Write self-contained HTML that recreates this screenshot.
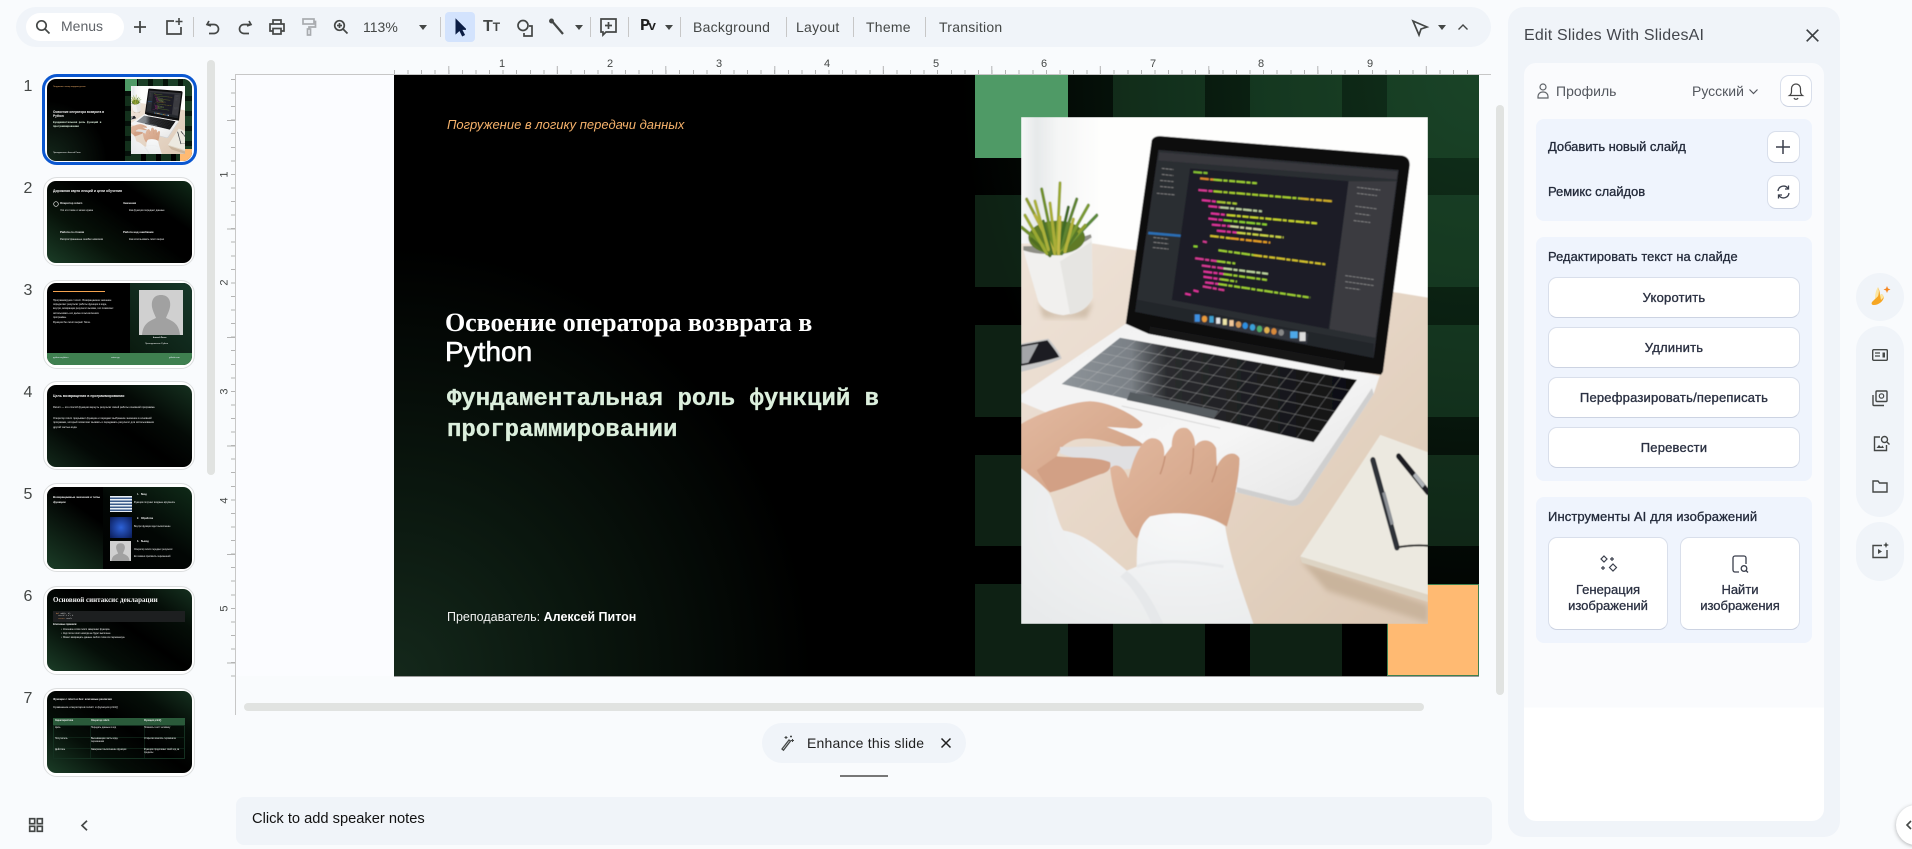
<!DOCTYPE html>
<html lang="ru"><head><meta charset="utf-8"><title>Slides</title>
<style>
*{box-sizing:border-box;margin:0;padding:0}
html,body{width:1912px;height:849px;overflow:hidden;background:#f9fbfd;font-family:"Liberation Sans",sans-serif;color:#444746}
.a{position:absolute}
#root{position:relative;width:1912px;height:849px;overflow:hidden}
.sep{position:absolute;top:17px;width:1px;height:20px;background:#c7c7c7}
.lb{position:absolute;top:19px;font-size:14px;line-height:16px;letter-spacing:.25px;color:#444746;white-space:nowrap}
svg.ic{position:absolute;fill:none;stroke:#444746;stroke-width:1.7;overflow:visible}
.rl{position:absolute;top:58px;font-size:11px;line-height:13px;width:12px;text-align:center;color:#444746}
.vl{position:absolute;left:219px;font-size:11px;line-height:13px;width:12px;text-align:center;transform:rotate(-90deg);color:#444746}
.tile{position:absolute;background:rgba(48,108,66,.3)}
.num{position:absolute;width:30px;left:13px;text-align:center;font-size:16px;line-height:18px;color:#444746}
.fr{position:absolute;left:43px;width:152px;height:89px;background:#fff;border:1.5px solid #dcdedf;border-radius:14px}
.s{position:absolute;left:47px;width:145px;height:82px;border-radius:9px;overflow:hidden;background:linear-gradient(45deg,#15301f 0%,#030805 40%,#000 60%,#0f2a18 100%)}
.t{position:absolute;color:#f2f2f2;font-size:2.8px;line-height:3.4px;font-weight:700;white-space:nowrap}
.panelT{position:absolute;font-size:13px;line-height:16px;color:#232a3a;-webkit-text-stroke:.3px #232a3a;white-space:nowrap}
.btn{position:absolute;left:1548px;width:252px;height:41px;background:#fff;border:1px solid #d9dfeb;border-bottom:1.5px solid #ccd3e2;border-radius:9px;text-align:center;font-size:13px;line-height:39px;color:#2b3142;-webkit-text-stroke:.35px #2b3142;letter-spacing:.2px}
.sq{position:absolute;background:#fff;border:1px solid #d9dfeb;border-bottom:1.5px solid #ccd3e2;border-radius:9px}
.pill{position:absolute;left:1856px;width:48px;background:#f0f4f9;border-radius:24px}
</style></head><body><div id="root">

<!-- symbols -->
<svg width="0" height="0" style="position:absolute">
<defs>
<linearGradient id="desk" x1="0" y1="0" x2="1" y2="1"><stop offset="0" stop-color="#eee3d8"/><stop offset=".5" stop-color="#e6d6c6"/><stop offset="1" stop-color="#dcc8b4"/></linearGradient>
<linearGradient id="kb" x1="300" y1="0" x2="1190" y2="0" gradientUnits="userSpaceOnUse"><stop offset="0" stop-color="#8f959a"/><stop offset=".24" stop-color="#7a8086"/><stop offset=".36" stop-color="#2a2b2e"/><stop offset="1" stop-color="#0e0e10"/></linearGradient>
<linearGradient id="cur" x1="183" y1="0" x2="420" y2="0" gradientUnits="userSpaceOnUse"><stop offset="0" stop-color="#f7f8f8"/><stop offset=".2" stop-color="#e6e9ea"/><stop offset=".45" stop-color="#f4f5f5"/><stop offset="1" stop-color="#fefefd"/></linearGradient>
<linearGradient id="base" x1="0" y1="0" x2="1" y2="1"><stop offset="0" stop-color="#f2f2f2"/><stop offset=".6" stop-color="#f5f5f5"/><stop offset="1" stop-color="#e2e2e2"/></linearGradient>
<linearGradient id="skin" x1="0" y1="0" x2="1" y2="1"><stop offset="0" stop-color="#e3b9a0"/><stop offset="1" stop-color="#cf9f82"/></linearGradient>
<radialGradient id="slv" cx=".7" cy=".3" r=".9"><stop offset="0" stop-color="#f7f8f9"/><stop offset="1" stop-color="#e8eaeb"/></radialGradient>
<filter id="bl" x="0" y="0" width="100%" height="100%"><feGaussianBlur stdDeviation="1.6"/></filter>
<filter id="bl2" x="-20%" y="-20%" width="140%" height="140%"><feGaussianBlur stdDeviation="7"/></filter>
<symbol id="photo" viewBox="183 140 1220 1263" preserveAspectRatio="none">
<g filter="url(#bl)">
<rect x="183" y="140" width="1220" height="1263" fill="#fefefd"/>
<rect x="183" y="140" width="240" height="340" fill="url(#cur)"/>
<polygon points="183,455 400,455 1403,590 1403,1403 183,1403" fill="url(#desk)"/>
<path d="M235,600 Q300,660 400,600 L380,640 L250,640Z" fill="#cfbda9" filter="url(#bl2)"/>
<path d="M190,472 Q290,500 395,440 L398,590 Q380,625 310,634 Q250,628 235,600 Z" fill="#f1f0ee"/>
<path d="M300,500 L395,450 L398,590 Q380,625 330,632Z" fill="#e6e5e2"/>
<path d="M190,472 Q290,500 395,440 L392,432 Q290,462 190,462Z" fill="#8f8f86"/>
<ellipse cx="290" cy="440" rx="85" ry="42" fill="#5f7a26"/>
<g stroke-width="9" stroke-linecap="round" fill="none">
<path d="M285,480 L200,345" stroke="#8c9b2e"/><path d="M285,480 L245,320" stroke="#6f8f2a"/><path d="M290,480 L300,305" stroke="#9aa832"/><path d="M295,480 L350,345" stroke="#5f8430"/><path d="M300,480 L410,385" stroke="#5c8a3a"/><path d="M280,480 L185,415" stroke="#6f8f2a"/><path d="M270,485 L215,445" stroke="#4f6e24"/><path d="M285,480 L225,385" stroke="#b7b23c"/><path d="M288,480 L270,355" stroke="#a9ad38"/><path d="M293,480 L325,365" stroke="#3f6a26"/><path d="M300,480 L375,410" stroke="#8fa030"/><path d="M275,480 L250,400" stroke="#48702a"/><path d="M295,480 L300,390" stroke="#c1b844"/><path d="M305,480 L350,430" stroke="#55782a"/><path d="M260,480 L195,385" stroke="#9aa832"/><path d="M310,470 L385,360" stroke="#7a9a30"/><path d="M265,470 L225,350" stroke="#aab03a"/><path d="M315,475 L340,395" stroke="#b4b23c"/></g>
<path d="M183,705 L265,692 Q300,725 305,742 Q240,765 183,775 Z" fill="#c8c8c8"/>
<path d="M183,708 L262,696 Q290,725 298,738 Q240,752 183,760 Z" fill="#1f1f21"/>
<path d="M185,712 L235,705 L205,752 L185,755Z" fill="#a3a5a8"/>
<!-- laptop base -->
<path d="M497,655 L1258,785 L1240,830 L1030,1095 Q1015,1112 990,1108 L830,1075 L183,850 L183,832 Z" fill="url(#base)"/>
<path d="M830,1075 L990,1108 Q1015,1112 1030,1095 L1240,830 L1235,815 L1020,1080 Q1005,1098 985,1095 L830,1062Z" fill="#cfcfcf"/>
<polygon points="480,690 1190,795 1060,950 305,805" fill="url(#kb)"/>
<g stroke="#c8c8c8" stroke-opacity=".38" stroke-width="2">
<path d="M451,709L1168,821M422,728L1147,847M392,748L1125,873M363,767L1103,898M334,786L1082,924"/>
<path d="M527,697L355,815M575,704L406,824M622,711L456,834M669,718L506,844M717,725L557,853M764,732L607,863M811,739L657,873M858,746L707,882M906,753L758,892M953,760L808,902M1000,767L858,912M1048,774L909,921M1095,781L959,931M1142,788L1009,940"/></g>
<polygon points="510,825 775,872 760,890 500,845" fill="#565b60"/>
<path d="M485,860 L780,915" stroke="#cfcfcf" stroke-width="2"/>
<!-- screen -->
<path d="M575,198 Q582,186 605,188 L1325,236 Q1350,240 1348,262 L1268,775 L1262,782 L1150,770 L565,680 L497,655 Z" fill="#0e0e10"/>
<polygon points="595,222 1315,272 1240,740 525,625" fill="#2c2d33"/>
<polygon points="690,268 1165,300 1105,668 635,596" fill="#1a1c28"/>
<polygon points="598,228 1312,276 1308,295 595,248" fill="#38393e"/>
<polygon points="1165,300 1308,300 1245,690 1108,668" fill="#3a3b41"/>
<polygon points="525,625 1240,740 1240,705 530,595" fill="#24252a"/>
<polygon points="565,426 662,433 661,439 564,432" fill="#2c6fb5"/>
<g stroke="#8a8a8a" stroke-width="2" stroke-dasharray="9 2"><path d="M605,268L640,271M605,283L640,286M600,298L640,301M600,313L640,316M590,330L645,334M580,440L625,444M580,452L625,456M578,465L625,469M1190,315L1260,322M1190,330L1250,336M1185,362L1250,369M1185,380L1230,385M1180,398L1230,403M1155,535L1240,545M1155,550L1240,560M1155,565L1200,570"/></g>
<g stroke-width="5" fill="none" stroke-dasharray="26 4 12 5 18 4">
<path d="M700,277L745,280" stroke="#86c232"/><path d="M720,293L760,296" stroke="#e08a2a"/><path d="M760,296L890,305" stroke="#9ed033"/>
<path d="M715,322L760,325" stroke="#d83a94"/><path d="M760,325L1020,343" stroke="#a7cf2e"/><path d="M1020,343L1115,350" stroke="#d4b126"/>
<path d="M725,347L770,351" stroke="#e0359b"/><path d="M770,351L830,356" stroke="#a8c833"/>
<path d="M745,362L780,365" stroke="#e0359b"/><path d="M780,365L905,375" stroke="#bcd0a0"/>
<path d="M752,380L800,384" stroke="#e0359b"/><path d="M800,384L1070,405" stroke="#c8d52c"/>
<path d="M745,393L790,397" stroke="#e0359b"/><path d="M790,397L920,408" stroke="#8fd32f"/>
<path d="M755,408L810,412" stroke="#e0359b"/><path d="M810,412L905,421" stroke="#d0d8a0"/>
<path d="M770,423L830,428" stroke="#e0359b"/><path d="M830,428L970,440" stroke="#cfd846"/>
<path d="M750,436L810,442" stroke="#d4c22a"/><path d="M810,442L930,453" stroke="#e8a020"/>
<path d="M728,450L740,452" stroke="#d83a94"/><path d="M700,462L712,463" stroke="#8fd32f"/>
<path d="M775,472L880,484" stroke="#9ed033"/><path d="M880,484L1095,507" stroke="#d4c22a"/>
<path d="M705,492L770,499" stroke="#d83a94"/><path d="M770,499L825,505" stroke="#9ed033"/>
<path d="M725,510L790,517" stroke="#d83a94"/><path d="M790,517L925,531" stroke="#c0d8a0"/>
<path d="M730,525L790,531" stroke="#e0359b"/><path d="M790,531L920,546" stroke="#9ed033"/>
<path d="M730,538L780,544" stroke="#e0359b"/><path d="M780,544L830,550" stroke="#9ed033"/>
<path d="M735,552L775,556" stroke="#e0359b"/><path d="M775,556L1050,590" stroke="#9ed033"/>
<path d="M728,562L795,572" stroke="#d83a94"/><path d="M675,580L692,583" stroke="#e0359b"/><path d="M700,572L715,575" stroke="#e0359b"/></g>
<polygon points="700,630 1045,680 1040,705 700,652" fill="#33353c"/>
<g><rect x="704" y="632" width="15" height="18" fill="#3d8fe0"/><circle cx="733" cy="643" r="8" fill="#e89a3a"/><rect x="748" y="636" width="12" height="16" fill="#3fa0d0"/><rect x="768" y="640" width="12" height="15" fill="#e5e5e5"/><rect x="788" y="643" width="12" height="15" fill="#efe6a8"/><rect x="808" y="646" width="12" height="15" fill="#f0c89a"/><circle cx="835" cy="657" r="8" fill="#d49a5a"/><circle cx="855" cy="660" r="8" fill="#2e8fe0"/><circle cx="877" cy="664" r="8" fill="#3aa0d8"/><circle cx="898" cy="668" r="8" fill="#4faa6a"/><circle cx="920" cy="671" r="8" fill="#e0b050"/><circle cx="941" cy="674" r="8" fill="#d88a3a"/><circle cx="963" cy="677" r="8" fill="#888"/><rect x="990" y="674" width="22" height="17" fill="#4da8e8"/><rect x="1018" y="676" width="18" height="22" fill="#ddd"/></g>
<polygon points="570,662 1155,748 1150,772 565,680" fill="#151518"/>
<!-- notebook -->
<path d="M1020,1245 L1403,1355 L1403,1400 L1100,1320Z" fill="#c9b49c" filter="url(#bl2)"/>
<polygon points="1260,932 1403,975 1403,1330 1020,1235" fill="#ece9e0"/>
<polygon points="1020,1235 1403,1330 1403,1348 1025,1250" fill="#ddd4c4"/>
<path d="M1238,995 L1310,1212" stroke="#2e3138" stroke-width="16" stroke-linecap="round"/>
<path d="M1270,1075 L1296,1155" stroke="#8d9196" stroke-width="10"/>
<path d="M1315,985 L1403,1075" stroke="#1d1f24" stroke-width="15" stroke-linecap="round"/>
<path d="M1362,1030L1390,1060" stroke="#b0b4b8" stroke-width="11"/>
<path d="M1310,1212 Q1360,1205 1403,1208" stroke="#2b2b2b" stroke-width="5" fill="none"/>
<!-- hands -->
<path d="M183,905 C230,880 330,850 390,848 C450,850 520,880 548,905 C545,915 530,918 500,915 L440,912 C480,925 530,940 548,955 C540,975 520,972 490,962 C440,945 380,935 340,945 C310,955 295,970 290,985 C330,990 410,985 450,1000 C455,1015 445,1025 420,1030 C370,1045 320,1065 270,1075 C235,1050 205,1030 183,1015 Z" fill="url(#skin)"/>
<path d="M300,962 L545,960 L540,1015 L452,1020 L300,978Z" fill="#e0e0e2"/>
<path d="M290,985 C330,990 410,985 450,1000 C455,1015 445,1025 420,1030 C370,1045 320,1065 270,1075 L230,1020 Z" fill="#d2a085"/>
<path d="M450,1015 C470,1000 490,1010 505,1040 C520,990 540,945 575,940 C605,940 615,960 612,985 L635,960 C635,925 655,910 680,915 C700,925 705,945 705,960 C720,940 755,940 768,965 L770,1010 C790,975 825,970 838,990 C838,1040 820,1100 800,1160 C740,1125 630,1125 570,1140 L530,1190 C490,1160 460,1090 450,1015 Z" fill="url(#skin)"/>
<path d="M615,985 Q610,1010 600,1030M700,965 Q700,1000 690,1030M770,1010 Q765,1030 755,1050" stroke="#c49074" stroke-width="4" fill="none"/>
<path d="M183,1015 C220,1040 260,1060 275,1090 C290,1130 300,1160 310,1170 C380,1180 430,1220 500,1270 L530,1260 C530,1190 535,1160 570,1135 C640,1120 740,1125 795,1160 C810,1240 850,1330 880,1403 L183,1403 Z" fill="url(#slv)"/>
<path d="M500,1270 Q560,1310 610,1403 L575,1403 Q530,1320 480,1285Z" fill="#e6e8ea"/>
<path d="M530,1260 Q620,1235 790,1260" stroke="#e8eaec" stroke-width="8" fill="none"/>
</g>
</symbol>
<symbol id="man" viewBox="0 0 44 45" preserveAspectRatio="none">
<rect width="44" height="45" fill="#d0d0d0"/>
<path d="M22,5 C29,5 32,10 31,17 C30,22 28,25 27,28 C33,31 40,33 41,45 L3,45 C4,33 11,31 17,28 C16,25 14,22 13,17 C12,10 15,5 22,5Z" fill="#a1a1a1"/>
</symbol>
</defs></svg>

<!-- Toolbar -->
<div class="a" style="left:16px;top:7px;width:1475px;height:40px;background:#f0f4f9;border-radius:20px"></div>
<div class="a" style="left:26px;top:13px;width:98px;height:28px;background:#fff;border-radius:14px"></div>
<svg class="ic" style="left:35px;top:19px" width="16" height="16" viewBox="0 0 16 16"><circle cx="6.5" cy="6.5" r="4.7"/><path d="M10 10l4.5 4.5"/></svg>
<div class="lb" style="left:61px;top:18px;color:#5f6368;letter-spacing:0">Menus</div>
<svg class="ic" style="left:134px;top:21px" width="12" height="12" viewBox="0 0 12 12"><path d="M6 0v12M0 6h12" stroke-width="1.8"/></svg>
<svg class="ic" style="left:165px;top:18px" width="18" height="18" viewBox="0 0 18 18"><path d="M9 3H2v13h14V9"/><path d="M14 0v7M10.5 3.5h7" stroke-width="1.6"/></svg>
<div class="sep" style="left:193px"></div>
<svg class="ic" style="left:206px;top:20px" width="14" height="15" viewBox="0 0 14 15"><path d="M3 1L1 4.5 5 6"/><path d="M1.5 4.5H8a4.5 4.5 0 0 1 0 9H3"/></svg>
<svg class="ic" style="left:238px;top:20px" width="14" height="15" viewBox="0 0 14 15"><path d="M11 1l2 3.5L9 6"/><path d="M12.5 4.5H6a4.5 4.5 0 0 0 0 9h5"/></svg>
<svg class="ic" style="left:269px;top:19px" width="16" height="16" viewBox="0 0 16 16"><path d="M4 5V1h8v4M4 12H1V5h14v7h-3"/><rect x="4" y="9.5" width="8" height="5.5"/></svg>
<svg class="ic" style="left:302px;top:18px;stroke:#a8abaf" width="14" height="18" viewBox="0 0 14 18"><rect x="1" y="1" width="11" height="5"/><path d="M12 3.5h1.5V9H7v2"/><rect x="5.5" y="11" width="3" height="6"/></svg>
<svg class="ic" style="left:333px;top:19px" width="16" height="16" viewBox="0 0 16 16"><circle cx="6.5" cy="6.5" r="4.8"/><path d="M10 10l4.5 4.5M6.5 4v5M4 6.5h5"/></svg>
<div class="lb" style="left:363px;letter-spacing:0">113%</div>
<svg class="a" style="left:419px;top:25px" width="8" height="5"><path d="M0 0h8L4 5z" fill="#444746"/></svg>
<div class="sep" style="left:440px"></div>
<div class="a" style="left:445px;top:12px;width:30px;height:30px;background:#d3e3fd;border-radius:4px"></div>
<svg class="a" style="left:454px;top:18px" width="12" height="19" viewBox="0 0 12 19"><path d="M2 1.5v14l3.6-3.3 2.8 5.6 2-1-2.8-5.400H12z" fill="#0b1d44" stroke="#0b1d44"/></svg>
<div class="a" style="left:483px;top:18px;font-size:16px;line-height:18px;font-weight:700;color:#444746">T<span style="font-size:12px">T</span></div>
<svg class="ic" style="left:516px;top:19px" width="18" height="18" viewBox="0 0 18 18"><circle cx="7" cy="6.5" r="5"/><path d="M13 7h3v10H8v-3"/></svg>
<svg class="ic" style="left:549px;top:19px" width="16" height="16" viewBox="0 0 16 16"><path d="M2 1l12 14" stroke-width="2.2"/><circle cx="2.5" cy="2" r="1.6" fill="#444746"/></svg>
<svg class="a" style="left:575px;top:25px" width="8" height="5"><path d="M0 0h8L4 5z" fill="#444746"/></svg>
<div class="sep" style="left:590px"></div>
<svg class="ic" style="left:600px;top:18px" width="18" height="19" viewBox="0 0 18 19"><path d="M1 1h15v13H6l-3 3v-3H1z"/><path d="M8.5 4v7M5 7.5h7"/></svg>
<div class="sep" style="left:628px"></div>
<div class="a" style="left:640px;top:18px;font-size:17px;line-height:18px;font-weight:700;color:#1f1f1f;font-family:'Liberation Mono',monospace">P<span style="font-size:13px;margin-left:-2px">v</span></div>
<svg class="a" style="left:665px;top:25px" width="8" height="5"><path d="M0 0h8L4 5z" fill="#444746"/></svg>
<div class="sep" style="left:680px"></div>
<div class="lb" style="left:693px">Background</div>
<div class="sep" style="left:786px"></div>
<div class="lb" style="left:796px">Layout</div>
<div class="sep" style="left:853px"></div>
<div class="lb" style="left:866px">Theme</div>
<div class="sep" style="left:925px"></div>
<div class="lb" style="left:939px">Transition</div>
<svg class="ic" style="left:1412px;top:20px" width="16" height="16" viewBox="0 0 16 16"><path d="M1 1l14 6-6 2-2 6z"/></svg>
<svg class="a" style="left:1438px;top:25px" width="8" height="5"><path d="M0 0h8L4 5z" fill="#444746"/></svg>
<svg class="ic" style="left:1458px;top:24px" width="10" height="6" viewBox="0 0 10 6"><path d="M.5 5.5L5 1l4.500 4.500" stroke-width="1.4"/></svg>

<!-- rulers -->
<div class="a" style="left:235px;top:74px;width:1256px;height:1px;background:#c7c7c7"></div>
<div class="a" style="left:394px;top:70px;width:1085px;height:4px;background:repeating-linear-gradient(90deg,#b4b4b4 0 1px,transparent 1px 13.58px)"></div>
<div class="a" style="left:394px;top:66px;width:1085px;height:8px;background:repeating-linear-gradient(90deg,#b4b4b4 0 1px,transparent 1px 108.6px);background-position:54.3px 0"></div>
<div class="rl" style="left:496px">1</div><div class="rl" style="left:604px">2</div><div class="rl" style="left:713px">3</div><div class="rl" style="left:821px">4</div><div class="rl" style="left:930px">5</div><div class="rl" style="left:1038px">6</div><div class="rl" style="left:1147px">7</div><div class="rl" style="left:1255px">8</div><div class="rl" style="left:1364px">9</div>
<div class="a" style="left:235px;top:74px;width:1px;height:641px;background:#c7c7c7"></div>
<div class="a" style="left:231px;top:79px;width:4px;height:599px;background:repeating-linear-gradient(180deg,#b4b4b4 0 1px,transparent 1px 13.56px)"></div>
<div class="a" style="left:227px;top:120px;width:8px;height:558px;background:repeating-linear-gradient(180deg,#b4b4b4 0 1px,transparent 1px 108.5px)"></div>
<div class="vl" style="top:168px">1</div><div class="vl" style="top:276px">2</div><div class="vl" style="top:385px">3</div><div class="vl" style="top:494px">4</div><div class="vl" style="top:602px">5</div>

<!-- slide -->
<div class="a" style="left:236px;top:75px;width:158px;height:601px;background:#fbfcff"></div>
<div class="a" id="slide" style="left:394px;top:75px;width:1085px;height:601px;overflow:hidden;background:radial-gradient(ellipse 420px 430px at 0% 100%,#14281b 0%,#0a160e 45%,#000 100%),#000;box-shadow:0 1px 0 #9a9a9a">
<div class="a" style="left:540px;top:0;width:545px;height:601px;background:radial-gradient(ellipse 520px 560px at 100% 0%,#11321c 0%,#0a1f11 45%,rgba(0,0,0,0) 100%)"></div>
<div class="tile" style="left:581px;top:0;width:93px;height:83px;background:#4f9a66"></div>
<div class="tile" style="left:719px;top:0;width:92px;height:83px"></div><div class="tile" style="left:856px;top:0;width:92px;height:83px"></div><div class="tile" style="left:993px;top:0;width:92px;height:83px"></div>
<div class="tile" style="left:581px;top:120px;width:93px;height:92px"></div><div class="tile" style="left:719px;top:120px;width:92px;height:92px"></div><div class="tile" style="left:856px;top:120px;width:92px;height:92px"></div><div class="tile" style="left:993px;top:120px;width:92px;height:92px"></div>
<div class="tile" style="left:581px;top:250px;width:93px;height:92px"></div><div class="tile" style="left:719px;top:250px;width:92px;height:92px"></div><div class="tile" style="left:856px;top:250px;width:92px;height:92px"></div><div class="tile" style="left:993px;top:250px;width:92px;height:92px"></div>
<div class="tile" style="left:581px;top:380px;width:93px;height:91px"></div><div class="tile" style="left:719px;top:380px;width:92px;height:91px"></div><div class="tile" style="left:856px;top:380px;width:92px;height:91px"></div><div class="tile" style="left:993px;top:380px;width:92px;height:91px"></div>
<div class="tile" style="left:581px;top:509px;width:93px;height:92px"></div><div class="tile" style="left:719px;top:509px;width:92px;height:92px"></div><div class="tile" style="left:856px;top:509px;width:92px;height:92px"></div>
<div class="tile" style="left:993px;top:509px;width:92px;height:92px;background:#ffba72;border:1px solid #3f8050"></div>
<svg class="a" style="left:627px;top:42px" width="407" height="507"><use href="#photo" width="407" height="507"/></svg>
<div class="a" style="left:53px;top:41px;font-size:13px;line-height:17px;font-style:italic;color:#f6b26b;white-space:nowrap">Погружение в логику передачи данных</div>
<div class="a" style="left:51px;top:233px;font-family:'Liberation Serif',serif;font-weight:700;font-size:26px;line-height:29px;letter-spacing:-.05px;color:#fff;white-space:nowrap">Освоение оператора возврата в</div>
<div class="a" style="left:51px;top:261px;font-size:28px;line-height:32px;color:#fff;-webkit-text-stroke:.6px #fff;white-space:nowrap">Python</div>
<div class="a" style="left:53px;top:309px;font-family:'Liberation Mono',monospace;font-weight:700;font-size:24px;line-height:31px;color:#dcefdd;-webkit-text-stroke:.3px #dcefdd;white-space:nowrap">Фундаментальная роль функций в<br>программировании</div>
<div class="a" style="left:53px;top:534px;font-size:12.500px;line-height:16px;color:#f3f3f3;white-space:nowrap">Преподаватель: <b style="color:#fff">Алексей Питон</b></div>
</div>

<!-- scrollbars -->
<div class="a" style="left:207px;top:60px;width:8px;height:415px;background:#e1e3e1;border-radius:4px"></div>
<div class="a" style="left:1496px;top:105px;width:8px;height:590px;background:#e1e3e1;border-radius:4px"></div>
<div class="a" style="left:244px;top:703px;width:1180px;height:8px;background:#e1e3e1;border-radius:4px"></div>

<!-- thumbs -->
<div class="num" style="top:78px">1</div><div class="num" style="top:180px">2</div><div class="num" style="top:282px">3</div><div class="num" style="top:384px">4</div><div class="num" style="top:486px">5</div><div class="num" style="top:588px">6</div><div class="num" style="top:690px">7</div>

<div class="a" style="left:41.5px;top:74px;width:155px;height:91px;border:3px solid #0b57d0;border-radius:15px;background:#fff"></div>
<div class="s" style="top:79px;background:radial-gradient(ellipse 60px 60px at 0% 100%,#14281b,#000)">
<div class="a" style="left:78px;top:0;width:12px;height:12px;background:#4f9a66"></div>
<div class="a" style="left:91px;top:0;width:54px;height:7px;background:repeating-linear-gradient(90deg,#1b3f26 0 10px,#06140a 10px 15px)"></div>
<div class="a" style="left:78px;top:12px;width:6px;height:70px;background:repeating-linear-gradient(180deg,#05100a 0 5px,#13301c 5px 15px)"></div>
<div class="a" style="left:138px;top:7px;width:7px;height:63px;background:repeating-linear-gradient(180deg,#1b3f26 0 10px,#08180d 10px 15px)"></div>
<div class="a" style="left:84px;top:75px;width:49px;height:7px;background:repeating-linear-gradient(90deg,#13301c 0 10px,#000 10px 15px)"></div>
<div class="a" style="left:133px;top:70px;width:12px;height:12px;background:#ffba72"></div>
<svg class="a" style="left:84px;top:7px" width="54" height="68"><use href="#photo" width="54" height="68"/></svg>
<div class="t" style="left:6px;top:7px;color:#f6b26b;font-weight:400;font-size:1.8px">Погружение в логику передачи данных</div>
<div class="t" style="left:6px;top:31px;font-size:3.2px;line-height:4.4px">Освоение оператора возврата в<br>Python</div>
<div class="t" style="left:6px;top:42px;font-size:2.7px;line-height:4.4px;color:#dcefdd;font-family:'Liberation Mono',monospace">Фундаментальная роль функций в<br>программировании</div>
<div class="t" style="left:6px;top:73px;font-size:1.9px;font-weight:400">Преподаватель: Алексей Питон</div>
</div>

<div class="fr" style="top:177px"></div>
<div class="s" style="top:181px;background:linear-gradient(35deg,#1b3d27 0%,#071209 30%,#000 55%,#000 72%,#0f2a18 100%)">
<div class="t" style="left:6px;top:8px;font-size:3.4px;line-height:4px">Дорожная карта лекций и цели обучения</div>
<svg class="a" style="left:6px;top:20px" width="6" height="6"><circle cx="3" cy="3" r="2.3" fill="none" stroke="#eee" stroke-width=".7"/></svg>
<div class="t" style="left:13px;top:21px">Оператор return</div><div class="t" style="left:13px;top:28px;font-weight:400;font-size:2.5px">Что это такое и зачем нужен</div>
<div class="t" style="left:76px;top:21px">Значения</div><div class="t" style="left:82px;top:28px;font-weight:400;font-size:2.5px">Как функция передает данные</div>
<div class="t" style="left:13px;top:50px">Работа со стеком</div><div class="t" style="left:13px;top:57px;font-weight:400;font-size:2.5px">Распространенные ошибки новичков</div>
<div class="t" style="left:76px;top:50px">Работа над ошибками</div><div class="t" style="left:82px;top:57px;font-weight:400;font-size:2.5px">Как использовать return верно</div>
</div>

<div class="fr" style="top:280px"></div>
<div class="s" style="top:283px;background:#000">
<div class="a" style="left:83px;top:0;width:62px;height:70px;background:linear-gradient(45deg,#0a1a0f,#17382a)"></div>
<div class="a" style="left:0;top:70px;width:145px;height:12px;background:#3f8050"></div>
<div class="a" style="left:6px;top:8px;width:52px;height:1.3px;background:#f6a34f"></div>
<div class="t" style="left:6px;top:16px;font-weight:400;font-size:2.5px;line-height:4.2px">Программируем с return. Возвращаемое значение<br>определяет результат работы функции в коде,<br>внутри, возвращая результат вызова, это позволяет<br>использовать его далее в вычислениях<br>программы.</div>
<div class="t" style="left:6px;top:38px;font-weight:400;font-size:2.5px">Функция без return вернёт None.</div>
<svg class="a" style="left:92px;top:7px" width="44" height="45"><use href="#man" width="44" height="45"/></svg>
<div class="t" style="left:106px;top:54px;font-size:1.8px">Алексей Питон</div>
<div class="t" style="left:98px;top:60px;font-weight:400;font-size:2.2px">Преподаватель Python</div>
<div class="t" style="left:6px;top:74px;font-weight:400;font-size:2.2px;color:#eef">python.org/docs</div>
<div class="t" style="left:64px;top:74px;font-weight:400;font-size:2.2px;color:#eef">return.py</div>
<div class="t" style="left:122px;top:74px;font-weight:400;font-size:2.2px;color:#eef">github.com</div>
</div>

<div class="fr" style="top:381px"></div>
<div class="s" style="top:385px;background:linear-gradient(215deg,#15301f 0%,#040a06 30%,#000 50%,#030805 75%,#13291b 100%)">
<div class="t" style="left:6px;top:9px;font-size:3.5px;line-height:4px">Цель возвращения в программировании</div>
<div class="t" style="left:6px;top:21px;font-weight:400;font-size:2.6px">Return — это способ функции вернуть результат своей работы основной программе.</div>
<div class="t" style="left:6px;top:32px;font-weight:400;font-size:2.6px;line-height:4.3px">Оператор return прерывает функцию и передает выбранное значение в основной<br>программе, который позволяет вызвать и передавать результат для использования<br>другой частью кода.</div>
</div>

<div class="fr" style="top:483px"></div>
<div class="s" style="top:487px;background:linear-gradient(215deg,#0f2a18 0%,#020604 40%,#000 100%)">
<div class="a" style="left:0;top:0;width:56px;height:82px;background:linear-gradient(215deg,#000 30%,#1b3d27 100%)"></div>
<div class="t" style="left:6px;top:8px;font-size:2.9px;line-height:5px">Возвращаемые значения и типы<br>функции</div>
<div class="a" style="left:63px;top:9px;width:22px;height:16px;background:repeating-linear-gradient(180deg,#e8eef5 0 1.5px,#3a5a8a 1.5px 3px)"></div>
<div class="a" style="left:63px;top:30px;width:22px;height:21px;background:radial-gradient(circle,#2d62d8,#0a1a55)"></div>
<svg class="a" style="left:63px;top:54px" width="21" height="20"><use href="#man" width="21" height="20"/></svg>
<div class="t" style="left:90px;top:7px;font-size:2.3px">1.&nbsp;&nbsp;&nbsp;Ввод</div><div class="t" style="left:87px;top:15px;font-weight:400;font-size:2.3px">Функция получает входные аргументы</div>
<div class="t" style="left:90px;top:31px;font-size:2.3px">2.&nbsp;&nbsp;&nbsp;Обработка</div><div class="t" style="left:87px;top:39px;font-weight:400;font-size:2.3px">Внутри функции идет вычисление</div>
<div class="t" style="left:90px;top:54px;font-size:2.3px">3.&nbsp;&nbsp;&nbsp;Вывод</div><div class="t" style="left:87px;top:62px;font-weight:400;font-size:2.3px">Оператор return передает результат</div><div class="t" style="left:87px;top:69px;font-weight:400;font-size:2.3px">Его можно присвоить переменной</div>
</div>

<div class="fr" style="top:586px"></div>
<div class="s" style="top:589px;background:linear-gradient(35deg,#1b3d27 0%,#050e08 30%,#000 55%,#050e08 78%,#15301f 100%)">
<div class="t" style="left:6px;top:7px;font-size:7px;line-height:8px;font-family:'Liberation Serif',serif">Основной синтаксис декларации</div>
<div class="a" style="left:6px;top:22px;width:132px;height:11px;background:#1d1f20"></div>
<div class="t" style="left:9px;top:24px;font-size:1.8px;line-height:2.3px;font-weight:400;font-family:'Liberation Mono',monospace;color:#ddd"><span style="color:#e59a5a">def</span> add(a, b):<br>&nbsp;&nbsp;result = a + b<br>&nbsp;&nbsp;<span style="color:#e59a5a">return</span> result</div>
<div class="t" style="left:6px;top:34px;font-size:2.4px">Ключевые правила:</div>
<div class="t" style="left:14px;top:39px;font-size:2.3px;font-weight:400;line-height:4px">• &nbsp;Ключевое слово return завершает функцию.<br>• &nbsp;Код после return никогда не будет выполнен.<br>• &nbsp;Может возвращать данные любого типа или переменную.</div>
</div>

<div class="fr" style="top:688px"></div>
<div class="s" style="top:691px;background:linear-gradient(35deg,#1b3d27 0%,#050e08 30%,#000 55%,#050e08 78%,#15301f 100%)">
<div class="t" style="left:6px;top:7px;font-size:2.7px">Функции с return и без: ключевые различия</div>
<div class="t" style="left:6px;top:15px;font-size:3px;font-weight:400">Сравнение операторов return и функции print()</div>
<div class="a" style="left:6px;top:27px;width:132px;height:7px;background:#2a5a3a"></div>
<div class="a" style="left:6px;top:34px;width:132px;height:34px;border:.5px solid #143020;background:linear-gradient(#143020,#143020) 36px 0/.6px 100% no-repeat,linear-gradient(#143020,#143020) 90px 0/.6px 100% no-repeat,linear-gradient(#143020,#143020) 0 11px/100% .6px no-repeat,linear-gradient(#143020,#143020) 0 22px/100% .6px no-repeat"></div>
<div class="t" style="left:8px;top:29px;font-size:2.3px">Характеристика</div><div class="t" style="left:44px;top:29px;font-size:2.3px">Оператор return</div><div class="t" style="left:97px;top:29px;font-size:2.3px">Функция print()</div>
<div class="t" style="left:8px;top:36px;font-size:2.3px;font-weight:400">Цель</div><div class="t" style="left:44px;top:36px;font-size:2.3px;font-weight:400">Передать данные в код</div><div class="t" style="left:97px;top:36px;font-size:2.3px;font-weight:400">Показать текст человеку</div>
<div class="t" style="left:8px;top:47px;font-size:2.3px;font-weight:400">Получатель</div><div class="t" style="left:44px;top:47px;font-size:2.3px;font-weight:400;line-height:3.4px">Вызывающая часть кода,<br>переменная</div><div class="t" style="left:97px;top:47px;font-size:2.3px;font-weight:400">Открытая консоль терминала</div>
<div class="t" style="left:8px;top:58px;font-size:2.3px;font-weight:400">Действие</div><div class="t" style="left:44px;top:58px;font-size:2.3px;font-weight:400">Завершает выполнение функции</div><div class="t" style="left:97px;top:58px;font-size:2.3px;font-weight:400;line-height:3.4px">Функция продолжает свой ход за<br>пределы</div>
</div>

<svg class="ic" style="left:29px;top:818px" width="14" height="14" viewBox="0 0 14 14"><rect x=".7" y=".7" width="5" height="5"/><rect x="8.3" y=".7" width="5" height="5"/><rect x=".7" y="8.3" width="5" height="5"/><rect x="8.3" y="8.3" width="5" height="5"/></svg>
<svg class="ic" style="left:81px;top:820px" width="7" height="11" viewBox="0 0 7 11"><path d="M6 .7L1 5.5l5 4.8"/></svg>

<!-- enhance -->
<div class="a" style="left:762px;top:723px;width:204px;height:40px;background:#f0f4f9;border-radius:20px"></div>
<svg class="ic" style="left:780px;top:735px" width="15" height="16" viewBox="0 0 15 16"><path d="M9 5L2 14l1.5 1.2L10.5 6z" stroke-width="1.3"/><path d="M6 1v3M4.5 2.5h3M12.5 4v3M11 5.5h3M11 .5v2M10 1.5h2" stroke-width="1.1"/></svg>
<div class="a" style="left:807px;top:735px;font-size:14px;line-height:16px;color:#1f1f1f;letter-spacing:.2px;white-space:nowrap">Enhance this slide</div>
<svg class="ic" style="left:941px;top:738px;stroke:#1f1f1f" width="10" height="10" viewBox="0 0 10 10"><path d="M.5 .5l9 9M9.5 .5l-9 9" stroke-width="1.5"/></svg>
<div class="a" style="left:840px;top:775px;width:48px;height:2px;background:#777"></div>

<!-- notes -->
<div class="a" style="left:236px;top:797px;width:1256px;height:48px;background:#f0f4f9;border-radius:8px"></div>
<div class="a" style="left:252px;top:811px;font-size:14.67px;line-height:17px;color:#111;white-space:nowrap">Click to add speaker notes</div>

<!-- right panel -->
<div class="a" style="left:1508px;top:7px;width:332px;height:830px;background:#f0f4f9;border-radius:16px"></div>
<div class="a" style="left:1524px;top:63px;width:300px;height:758px;background:linear-gradient(#fafbfd 0,#fafbfd 85%,#fff 85%);border-radius:12px"></div>
<div class="a" style="left:1524px;top:26px;font-size:16px;line-height:19px;letter-spacing:.2px;color:#43464c;white-space:nowrap">Edit Slides With SlidesAI</div>
<svg class="ic" style="left:1806px;top:29px;stroke:#3c4043" width="13" height="13" viewBox="0 0 13 13"><path d="M.7 .7l11.6 11.6M12.3 .7L.7 12.3" stroke-width="1.7"/></svg>
<svg class="ic" style="left:1537px;top:83px;stroke:#5f6368" width="12" height="16" viewBox="0 0 12 16"><circle cx="6" cy="4" r="3" stroke-width="1.2"/><path d="M1 15v-1.500A4.500 4.500 0 0 1 5.500 9h1a4.500 4.500 0 0 1 4.500 4.500V15z" stroke-width="1.2"/></svg>
<div class="a" style="left:1556px;top:83px;font-size:14px;line-height:17px;color:#53575e;white-space:nowrap">Профиль</div>
<div class="a" style="left:1692px;top:83px;font-size:14px;line-height:17px;color:#53575e;white-space:nowrap">Русский</div>
<svg class="ic" style="left:1749px;top:89px;stroke:#53575e" width="9" height="5" viewBox="0 0 9 5"><path d="M.5 .5l4 4 4-4" stroke-width="1.2"/></svg>
<div class="sq" style="left:1780px;top:75px;width:32px;height:32px"></div>
<svg class="ic" style="left:1788px;top:82px;stroke:#444" width="16" height="18" viewBox="0 0 16 18"><path d="M1.5 13.5c1.500-1 2-2 2-4V6.500a4.500 4.500 0 0 1 9 0v3c0 2 .5 3 2 4z" stroke-width="1.2"/><path d="M6 16a2.200 2.200 0 0 0 4 0" stroke-width="1.2"/></svg>

<div class="a" style="left:1536px;top:119px;width:276px;height:102px;background:#eff4fd;border-radius:8px"></div>
<div class="panelT" style="left:1548px;top:139px;font-size:13px;letter-spacing:-.05px">Добавить новый слайд</div>
<div class="panelT" style="left:1548px;top:184px;font-size:13px;letter-spacing:-.05px">Ремикс слайдов</div>
<div class="sq" style="left:1767px;top:131px;width:33px;height:32px"></div>
<svg class="ic" style="left:1776px;top:140px;stroke:#3a3f4c" width="14" height="14" viewBox="0 0 14 14"><path d="M7 0v14M0 7h14" stroke-width="1.5"/></svg>
<div class="sq" style="left:1767px;top:175px;width:33px;height:34px"></div>
<svg class="ic" style="left:1776px;top:185px;stroke:#3a3f4c" width="15" height="14" viewBox="0 0 15 14"><path d="M2 6a5.500 5.500 0 0 1 10-2.500M13 8a5.500 5.500 0 0 1-10 2.500" stroke-width="1.3"/><path d="M12.500 .5v3.500H9M2.500 13.500V10H6" stroke-width="1.3"/></svg>

<div class="a" style="left:1536px;top:237px;width:276px;height:244px;background:#eff4fd;border-radius:8px"></div>
<div class="panelT" style="left:1548px;top:249px;font-size:12.8px;letter-spacing:.1px">Редактировать текст на слайде</div>
<div class="btn" style="top:277px">Укоротить</div>
<div class="btn" style="top:327px">Удлинить</div>
<div class="btn" style="top:377px">Перефразировать/переписать</div>
<div class="btn" style="top:427px">Перевести</div>

<div class="a" style="left:1536px;top:497px;width:276px;height:146px;background:#eff4fd;border-radius:8px"></div>
<div class="panelT" style="left:1548px;top:509px;font-size:13px;letter-spacing:.1px">Инструменты AI для изображений</div>
<div class="sq" style="left:1548px;top:537px;width:120px;height:93px;text-align:center;padding-top:44px;font-size:13px;line-height:16px;color:#2b3142;-webkit-text-stroke:.3px #2b3142">Генерация<br>изображений</div>
<div class="sq" style="left:1680px;top:537px;width:120px;height:93px;text-align:center;padding-top:44px;font-size:13px;line-height:16px;color:#2b3142;-webkit-text-stroke:.3px #2b3142">Найти<br>изображения</div>
<svg class="ic" style="left:1599px;top:555px;stroke:#3a3f4c" width="19" height="18" viewBox="0 0 19 18"><path d="M5 1l3 3-3 3-3-3zM14 9l3.500 3.500L14 16l-3.500-3.500z" stroke-width="1.2"/><path d="M13 2v4M11 4h4M4 11v4M2 13h4" stroke-width="1.2"/></svg>
<svg class="ic" style="left:1732px;top:555px;stroke:#3a3f4c" width="17" height="18" viewBox="0 0 17 18"><path d="M7 17H3a2 2 0 0 1-2-2V3a2 2 0 0 1 2-2h9a2 2 0 0 1 2 2v6" stroke-width="1.3"/><circle cx="12" cy="13.500" r="2.800" stroke-width="1.3"/><path d="M14 15.500l2 2" stroke-width="1.3"/></svg>

<!-- side pills -->
<div class="pill" style="top:273px;height:48px"></div>
<div class="pill" style="top:326px;height:191px"></div>
<div class="pill" style="top:522px;height:59px"></div>
<svg class="a" style="left:1869px;top:285px" width="22" height="22" viewBox="0 0 22 22"><path d="M9 2c1 3 1 6 0 9L3 17c-1 2 0 3 2 3 4 0 9-3 10-8l-2-3-2 1c0-3-1-6-2-8z" fill="#f6a623"/><path d="M9 2c1 3 1 6 0 9l-3 3c0-5 1-9 3-12z" fill="#fbe6a2"/><path d="M11 10l2-1 2 3-3 3z" fill="#fbe6a2"/><path d="M18 1l1 2.500 2.500 1-2.500 1-1 2.500-1-2.500-2.500-1 2.500-1z" fill="#f6861f"/></svg>
<svg class="ic" style="left:1872px;top:349px" width="16" height="12" viewBox="0 0 16 12"><rect x=".7" y=".7" width="14.6" height="10.6" rx="1" stroke-width="1.4"/><path d="M3 4h5M3 7h5" stroke-width="1.3"/><rect x="10.5" y="3.5" width="2.5" height="5" fill="#444746" stroke="none"/></svg>
<svg class="ic" style="left:1872px;top:390px" width="16" height="17" viewBox="0 0 16 17"><rect x="4" y="1" width="11" height="10.5" rx="1" stroke-width="1.4"/><circle cx="9.5" cy="6" r="2.2" stroke-width="1.2"/><path d="M1 5v9.500a1 1 0 0 0 1 1h10" stroke-width="1.4"/></svg>
<svg class="ic" style="left:1873px;top:435px" width="17" height="17" viewBox="0 0 17 17"><path d="M7 2H1.500v13.500h12V10" stroke-width="1.4"/><circle cx="11.5" cy="4.5" r="3" stroke-width="1.4"/><path d="M14 7l2.500 2.500" stroke-width="1.4"/><path d="M3.500 13l2.500-3 2 2 1.500-1.500 1.500 2.500z" fill="#444746" stroke="none"/></svg>
<svg class="ic" style="left:1872px;top:480px" width="16" height="13" viewBox="0 0 16 13"><path d="M1 1h5l1.500 2H15v9H1z" stroke-width="1.4"/></svg>
<svg class="ic" style="left:1872px;top:542px" width="17" height="17" viewBox="0 0 17 17"><path d="M10 3.500H1v12h14V8" stroke-width="1.4"/><path d="M6 7v5l4-2.500z" fill="#444746" stroke="none"/><path d="M14 0l.9 2.100L17 3l-2.100.9L14 6l-.9-2.100L11 3l2.100-.9z" fill="#444746" stroke="none"/></svg>
<div class="a" style="left:1896px;top:805px;width:40px;height:40px;border-radius:50%;background:#fff;box-shadow:0 1px 4px rgba(0,0,0,.3)"></div>
<svg class="ic" style="left:1906px;top:820px" width="6" height="10" viewBox="0 0 6 10"><path d="M5 1L1 5l4 4" stroke-width="1.6"/></svg>

</div></body></html>
